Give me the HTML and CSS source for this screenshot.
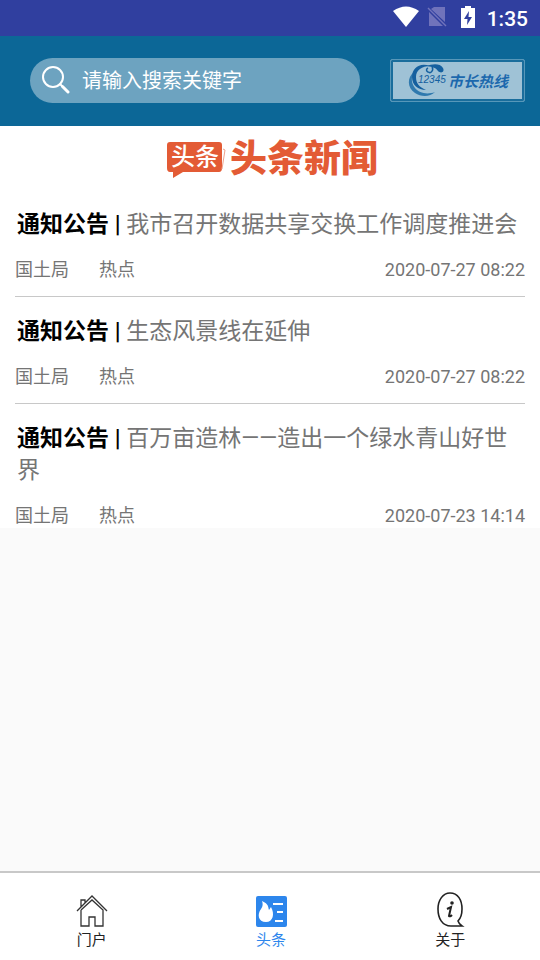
FILE: index.html
```html
<!DOCTYPE html>
<html lang="zh-CN">
<head>
<meta charset="utf-8">
<meta name="viewport" content="width=device-width, initial-scale=1">
<title>头条新闻</title>
<link rel="stylesheet" href="styles.css">
</head>
<body>
<div class="status">
  <svg class="wifi" viewBox="0 0 26 22" width="26" height="22" aria-hidden="true"><path d="M0 5Q13-4 26 5L13 21Z" fill="#fff"/></svg>
  <svg class="sim" viewBox="0 0 20 22" width="20" height="22" aria-hidden="true"><path d="M7 1H18V16L4 3ZM2 6L16 20H2Z" fill="#7073bb"/><path d="M1 2L19 20" stroke="#7073bb" stroke-width="1.500"/></svg>
  <svg class="battery" viewBox="0 0 14 22" width="14" height="22" aria-hidden="true"><path d="M4 0H10V2H14V22H0V2H4Z" fill="#fff"/><path d="M8 5L3 13H6.500L6 19L11 11H7.500Z" fill="#303f9f"/></svg>
  <time class="clock">1:35</time>
</div>
<header class="top">
  <label class="search">
    <svg viewBox="0 0 28 28" width="28" height="28" fill="none" stroke="#fff" stroke-linecap="round" aria-hidden="true"><circle cx="11" cy="11" r="10" stroke-width="2"/><path d="M18 18L20 20" stroke-width="2"/><path d="M20.500 20.500L26 26" stroke-width="3"/></svg>
    <input type="search" placeholder="请输入搜索关键字" aria-label="搜索">
  </label>
  <button class="hotline" type="button" aria-label="12345 市长热线">
    <svg viewBox="0 0 40 34" width="40" height="34" aria-hidden="true">
      <path d="M7 9C0 14 0 25 8 30C14 34 23 34 28 29C20 32 12 30 8 25C4 20 4 14 7 9Z" fill="#2f79ae"/>
      <path d="M23 3C13-1 5 5 5 14C5 22 11 27 19 27C12 24 9 20 9 14C9 7 15 3 23 3Z" fill="#15609f"/>
      <path d="M20 3C25 1 33 0 36 5C38 9 34 11 31 8C29 5 26 4 20 3Z" fill="#15609f"/>
      <path d="M25 4C27 7 24 11 21 9C19 8 19 6 21 5" fill="none" stroke="#15609f" stroke-width="1.500"/>
      <text x="11" y="20" class="digits">12345</text>
    </svg>
    <span>市长热线</span>
  </button>
</header>
<main class="news">
  <h1 class="brand">
    <span class="bubble">头条<svg viewBox="0 0 60 38" width="60" height="38" aria-hidden="true"><path d="M3 1H52Q55 1 55 4V27Q55 31 52 31H16L6 37V31H3Q0 31 0 27V4Q0 1 3 1Z" fill="#e35b35"/><path d="M56 8L58 9L55 28" fill="none" stroke="#efa28d" stroke-width="1"/></svg></span>
    <span class="name">头条新闻</span>
  </h1>
  <article class="item">
    <h2><b>通知公告 |</b> 我市召开数据共享交换工作调度推进会</h2>
    <p class="meta"><span>国土局</span><span>热点</span><time>2020-07-27 08:22</time></p>
  </article>
  <article class="item">
    <h2><b>通知公告 |</b> 生态风景线在延伸</h2>
    <p class="meta"><span>国土局</span><span>热点</span><time>2020-07-27 08:22</time></p>
  </article>
  <article class="item">
    <h2><b>通知公告 |</b> 百万亩造林——造出一个绿水青山好世界</h2>
    <p class="meta"><span>国土局</span><span>热点</span><time>2020-07-23 14:14</time></p>
  </article>
</main>
<nav class="tabs">
  <a href="#portal">
    <svg viewBox="0 0 32 36" width="32" height="36" fill="none" stroke="#333" stroke-width="1.300" aria-hidden="true"><path d="M1 19L16 4L31 19M5 18V34H13V25H19V34H27V18L16 8L5 18M5 15V8H9V11"/></svg>
    <span>门户</span>
  </a>
  <a href="#headlines" class="active" aria-current="page">
    <svg viewBox="0 0 32 36" width="32" height="36" aria-hidden="true"><rect x="1" y="4" width="31" height="31" rx="2" fill="#2d86ec"/><path d="M7 9C14 12 13 15 14 18L16 15C20 22 18 30 11 30C3 30 2 22 6 17C8 14 8 12 7 9Z" fill="#fff"/><path d="M18 12H28M22 20H28M20 29H28" stroke="#fff" stroke-width="2"/></svg>
    <span>头条</span>
  </a>
  <a href="#about">
    <svg viewBox="0 0 32 36" width="32" height="36" fill="none" stroke="#222" aria-hidden="true"><path d="M28 34H17C8 34 4 26 4 17C4 8 9 1 16 1C24 1 28 8 28 17C28 23 26 27 24 29Q25 32 28 34Z" stroke-width="1.600"/><circle cx="18" cy="11" r="1.800" fill="#222" stroke="none"/><path d="M13 17L17 15L15 24Q16 25 18 23" stroke-width="2"/></svg>
    <span>关于</span>
  </a>
</nav>
</body>
</html>
```
FILE: styles.css
```css
* { box-sizing: border-box; }
body {
  margin: 0;
  min-height: 100vh;
  display: flex;
  flex-direction: column;
  background: #fafafa;
  color: #757575;
  font-family: Roboto, "Noto Sans CJK SC", sans-serif;
}
h1, h2, p { margin: 0; font-weight: 400; }
svg { display: block; flex: none; }
.status {
  height: 36px;
  padding: 0 12px;
  display: flex;
  justify-content: flex-end;
  align-items: center;
  background: #303f9f;
  color: #fff;
}
.status svg { margin-bottom: 2px; }
.status .sim { margin-left: 8px; }
.status .battery { margin-left: 14px; }
.clock { margin-left: 12px; padding-top: 2px; font-size: 21px; font-weight: 500; }
.top {
  height: 90px;
  padding: 0 15px 2px 30px;
  display: flex;
  align-items: center;
  gap: 30px;
  background: #0c6797;
}
.search {
  flex: 1;
  min-width: 0;
  height: 45px;
  padding: 0 12px;
  display: flex;
  align-items: center;
  gap: 12px;
  border-radius: 23px;
  background: #6da3c0;
}
.search input {
  flex: 1;
  min-width: 0;
  padding: 2px 0 0;
  border: 0;
  outline: 0;
  background: none;
  color: #fff;
  font: 20px/30px Roboto, "Noto Sans CJK SC", sans-serif;
}
.search input::placeholder { color: #fff; opacity: 1; }
.hotline {
  width: 135px;
  height: 43px;
  padding: 0;
  display: flex;
  align-items: center;
  justify-content: center;
  gap: 1px;
  border: 1px solid #5797b9;
  border-radius: 2px;
  box-shadow: inset 0 0 0 2px #1a6d9c;
  background: #9fc2d6;
  color: #1c68ad;
  font: italic 700 15px/20px "Noto Sans CJK SC", sans-serif;
}
.hotline span { padding-top: 2px; }
.digits { font: italic 10px "Liberation Sans", sans-serif; fill: #15609f; }
.news { background: #fff; }
.brand {
  height: 65px;
  padding: 1px 0 0 5px;
  display: flex;
  justify-content: center;
  align-items: center;
  gap: 3px;
  color: #e35b35;
}
.bubble {
  position: relative;
  z-index: 0;
  width: 60px;
  height: 36px;
  padding-left: 4px;
  color: #fff;
  font-size: 24px;
  font-weight: 500;
  line-height: 32px;
}
.bubble svg { position: absolute; top: 0; left: 0; z-index: -1; }
.name { padding-top: 2px; font-size: 37px; font-weight: 900; line-height: 40px; }
.item {
  margin: 0 15px;
  padding: 18px 0 14px;
  border-bottom: 1px solid #c8c8c8;
}
.item + .item { padding-top: 19px; }
.item:last-child { padding-bottom: 0; border-bottom: 0; }
.item h2 { padding: 0 2px; font-size: 23px; line-height: 32px; }
.item b { color: #000; font-weight: 700; }
.meta {
  margin-top: 17px;
  display: flex;
  gap: 30px;
  font-size: 18px;
  line-height: 24px;
}
.meta time { margin-left: auto; }
.tabs {
  margin-top: auto;
  height: 89px;
  padding-left: 2px;
  display: flex;
  border-top: 2px solid #c8c8c8;
  background: #fff;
}
.tabs a {
  flex: 1;
  padding-top: 19px;
  display: flex;
  flex-direction: column;
  align-items: center;
  color: #222;
  font-size: 15px;
  line-height: 24px;
  text-decoration: none;
}
.tabs .active { color: #2d86ec; }
```
